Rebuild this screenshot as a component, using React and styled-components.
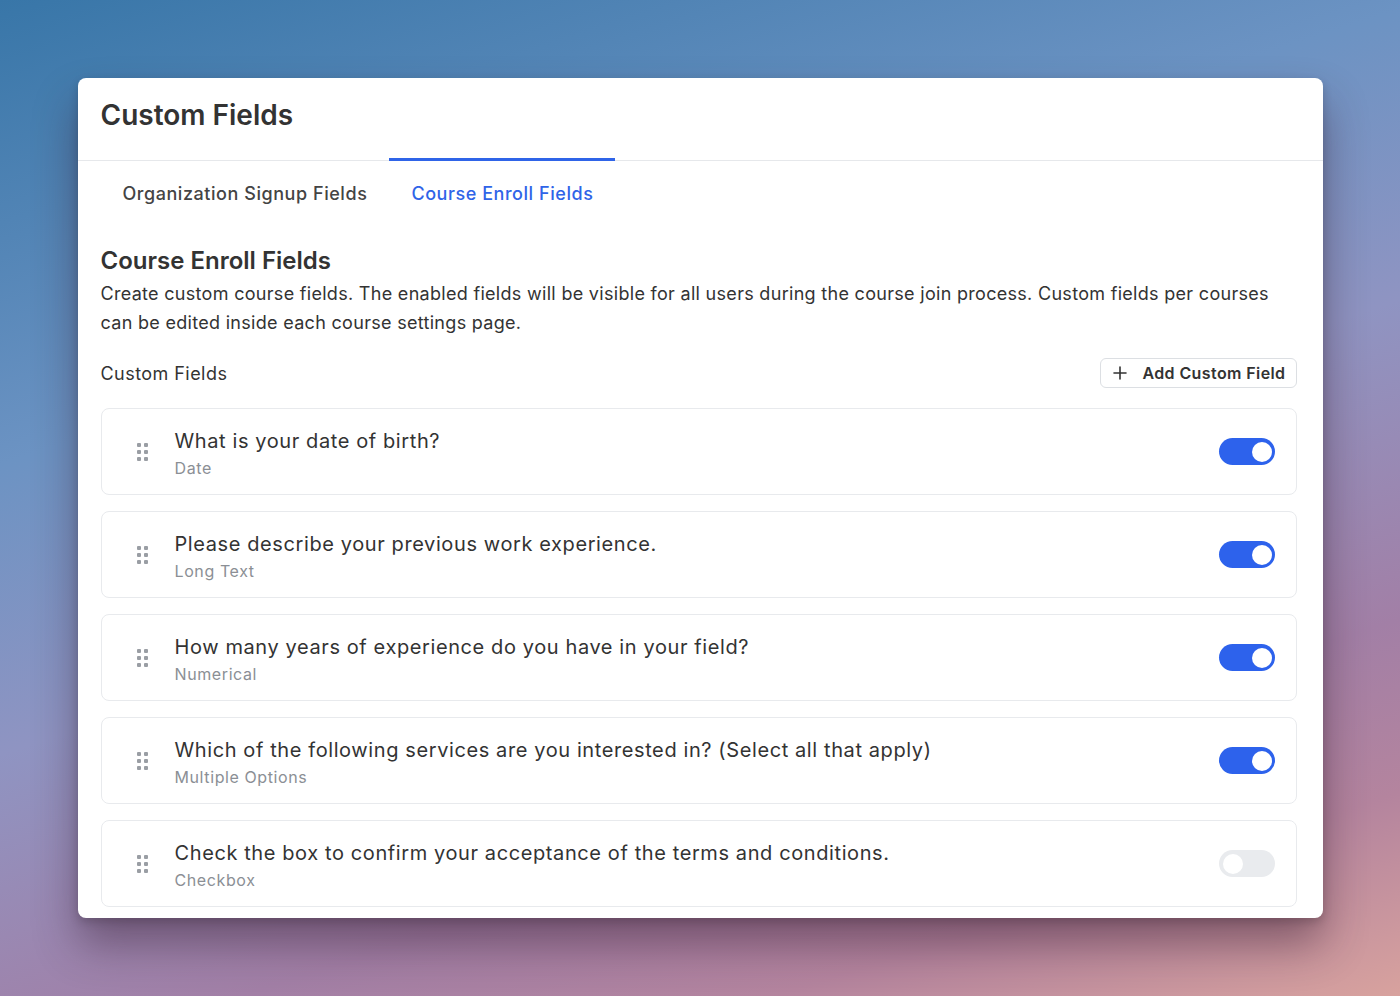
import React from "react";
import styled, { createGlobalStyle } from "styled-components";

const GlobalStyle = createGlobalStyle`
  html, body {
    margin: 0;
    padding: 0;
  }
  body {
    font-family: Inter, "Noto Sans", "Liberation Sans", sans-serif;
    color: #333;
    min-height: 996px;
    background: linear-gradient(162deg, #3876a8 0%, #6c93c3 32%, #8f94c2 52%, #a27fa6 74%, #b4849e 86%, #d8a29e 100%);
    overflow: hidden;
  }
`;

const Page = styled.div`
  padding-top: 78px;
  display: flex;
  justify-content: center;
  height: 996px;
  box-sizing: border-box;
`;

const Card = styled.div`
  width: 1245px;
  height: 840px;
  background: #fff;
  border-radius: 8px;
  overflow: hidden;
  box-shadow: 0 26px 44px rgba(50, 25, 45, 0.45), 0 4px 10px rgba(0, 0, 0, 0.18);
  display: flex;
  flex-direction: column;
`;

const Header = styled.div`
  height: 83px;
  box-sizing: border-box;
  padding: 0 23px;
  display: flex;
  align-items: center;
  border-bottom: 1px solid #e6e8eb;
  h1 {
    margin: 0 0 8px;
    font-size: 28px;
    font-weight: 600;
    color: #333;
    letter-spacing: 0;
  }
`;

const Tabs = styled.div`
  display: flex;
  padding: 0 23px;
  margin-top: -3px;
`;

const Tab = styled.div`
  padding: 22px 22px 19px;
  font-size: 18px;
  font-weight: 500;
  letter-spacing: 0.55px;
  color: ${(p) => (p.$active ? "#2f64e8" : "#444")};
  border-top: 3px solid ${(p) => (p.$active ? "#2f64e8" : "transparent")};
`;

const Body = styled.div`
  padding: 23px 26px 0 23px;
`;

const SectionTitle = styled.h2`
  margin: 0;
  font-size: 24px;
  font-weight: 600;
  color: #333;
  line-height: 30px;
  letter-spacing: 0;
`;

const Description = styled.p`
  margin: 3px 0 0;
  font-size: 18px;
  line-height: 29px;
  color: #333;
  letter-spacing: 0.3px;
`;

const ListHeader = styled.div`
  display: flex;
  justify-content: space-between;
  align-items: center;
  margin-top: 21px;
  margin-bottom: 20px;
  span {
    font-size: 18px;
    color: #333;
    letter-spacing: 0.45px;
  }
`;

const AddButton = styled.button`
  display: flex;
  align-items: center;
  gap: 15px;
  height: 30px;
  padding: 0 10px 0 12px;
  background: #fff;
  border: 1px solid #dcdfe3;
  border-radius: 6px;
  font-family: inherit;
  font-size: 16px;
  font-weight: 600;
  color: #333;
  letter-spacing: 0.4px;
  cursor: pointer;
`;

const List = styled.div`
  display: flex;
  flex-direction: column;
  gap: 16px;
`;

const Row = styled.div`
  height: 87px;
  box-sizing: border-box;
  border: 1px solid #e8eaed;
  border-radius: 8px;
  display: flex;
  align-items: center;
  padding: 0 21px 0 35px;
`;

const Handle = styled.div`
  display: grid;
  grid-template-columns: 4px 4px;
  grid-template-rows: 4px 4px 4px;
  gap: 3px;
  margin-right: 27px;
  i {
    width: 4px;
    height: 4px;
    border-radius: 1px;
    background: #9a9ea4;
  }
`;

const Info = styled.div`
  flex: 1;
  display: flex;
  flex-direction: column;
  gap: 4px;
  margin-top: 3px;
`;

const Title = styled.div`
  font-size: 20px;
  color: #333;
  line-height: 26px;
  letter-spacing: 0.6px;
`;

const Type = styled.div`
  font-size: 16px;
  color: #8b8f95;
  letter-spacing: 0.6px;
`;

const Switch = styled.div`
  width: 56px;
  height: 27px;
  border-radius: 14px;
  background: ${(p) => (p.$on ? "#2d62ec" : "#e9ebee")};
  position: relative;
  &::after {
    content: "";
    position: absolute;
    top: 3.5px;
    left: ${(p) => (p.$on ? "33px" : "4px")};
    width: 20px;
    height: 20px;
    border-radius: 50%;
    background: #fff;
  }
`;

const fields = [
  { title: "What is your date of birth?", type: "Date", on: true },
  { title: "Please describe your previous work experience.", type: "Long Text", on: true },
  { title: "How many years of experience do you have in your field?", type: "Numerical", on: true },
  { title: "Which of the following services are you interested in? (Select all that apply)", type: "Multiple Options", on: true },
  { title: "Check the box to confirm your acceptance of the terms and conditions.", type: "Checkbox", on: false },
];

const PlusIcon = () => (
  <svg width="14" height="14" viewBox="0 0 14 14" fill="none" stroke="#333" strokeWidth="1.6" strokeLinecap="round">
    <path d="M7 1v12M1 7h12" />
  </svg>
);

const App = () => {
  return (
    <>
      <GlobalStyle />
      <Page>
        <Card>
          <Header>
            <h1>Custom Fields</h1>
          </Header>
          <Tabs>
            <Tab>Organization Signup Fields</Tab>
            <Tab $active>Course Enroll Fields</Tab>
          </Tabs>
          <Body>
            <SectionTitle>Course Enroll Fields</SectionTitle>
            <Description>
              Create custom course fields. The enabled fields will be visible for all users during the course join
              process. Custom fields per courses can be edited inside each course settings page.
            </Description>
            <ListHeader>
              <span>Custom Fields</span>
              <AddButton>
                <PlusIcon />
                Add Custom Field
              </AddButton>
            </ListHeader>
            <List>
              {fields.map((f) => (
                <Row key={f.title}>
                  <Handle>
                    <i /><i /><i /><i /><i /><i />
                  </Handle>
                  <Info>
                    <Title>{f.title}</Title>
                    <Type>{f.type}</Type>
                  </Info>
                  <Switch $on={f.on} />
                </Row>
              ))}
            </List>
          </Body>
        </Card>
      </Page>
    </>
  );
};

export default App;
